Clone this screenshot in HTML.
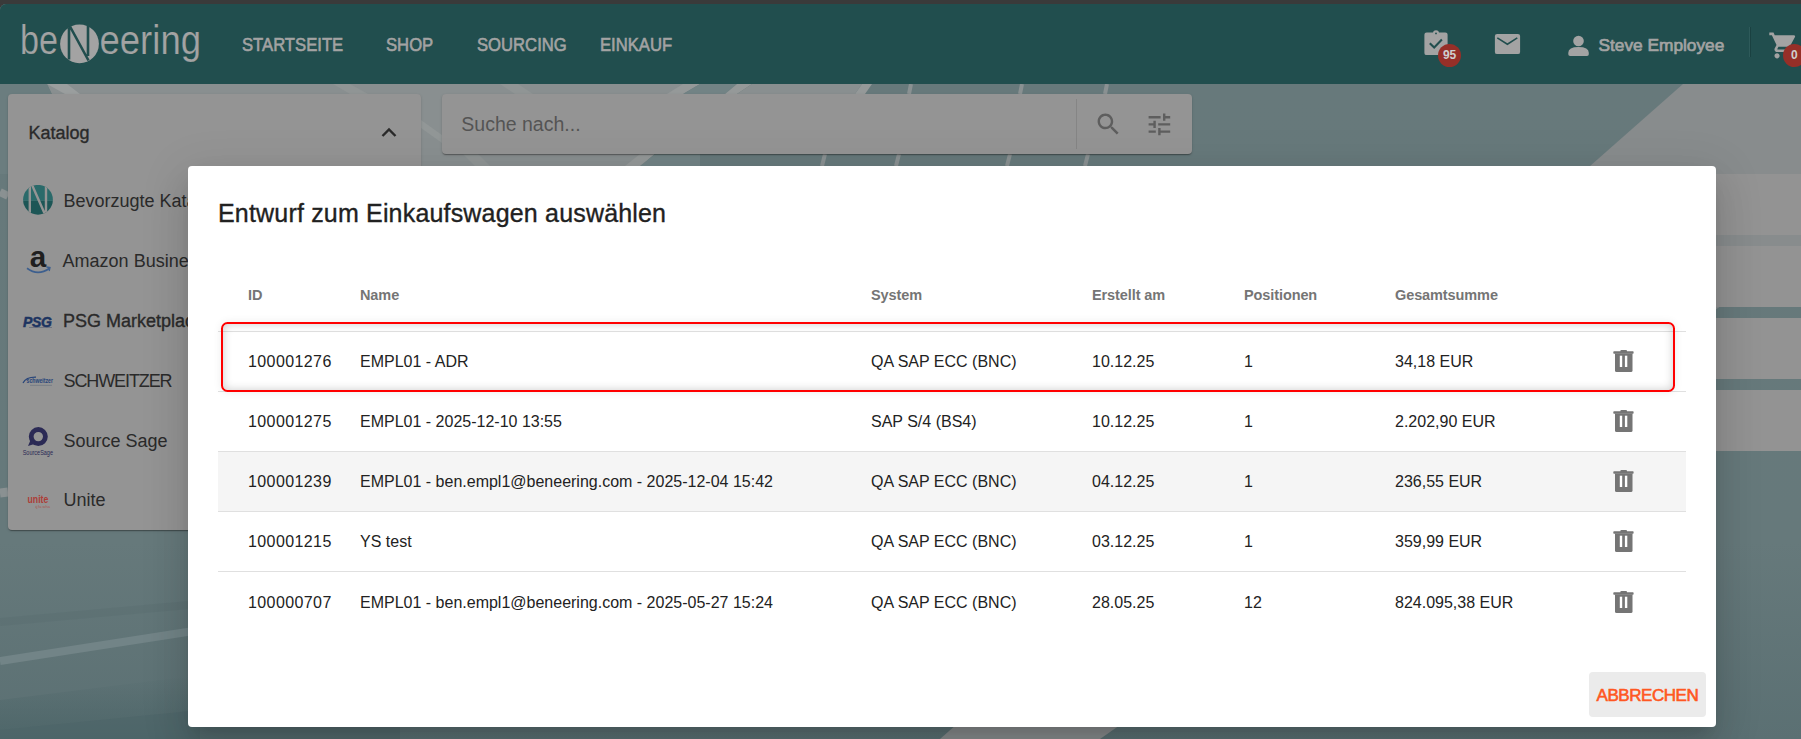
<!DOCTYPE html>
<html><head><meta charset="utf-8">
<style>
*{box-sizing:border-box;margin:0;padding:0}
html,body{width:1801px;height:739px;overflow:hidden;background:#3a3a3a}
body{position:relative;font-family:"Liberation Sans",sans-serif}
.a{position:absolute;white-space:nowrap}
#bg{left:0;top:4px;width:1801px;height:735px;background:#617477;border-top-left-radius:6px;overflow:hidden}
#hdr{left:0;top:4px;width:1801px;height:80px;background:#214e4e;border-top-left-radius:6px}
.nav{top:35.8px;font-size:18px;line-height:18px;color:#a3a3a3;transform:scaleX(0.925);transform-origin:0 0;-webkit-text-stroke:0.6px #a3a3a3}
.card{background:#949494;border-radius:4px;box-shadow:0 2px 1px -1px rgba(0,0,0,.2),0 1px 1px 0 rgba(0,0,0,.14),0 1px 3px 0 rgba(0,0,0,.12)}
.sbt{font-size:18px;line-height:18px;color:#2a2a2a}
.med{-webkit-text-stroke:0.35px currentColor}
#modal{left:188px;top:166px;width:1528px;height:561px;background:#fff;border-radius:4px;box-shadow:0 11px 15px -7px rgba(0,0,0,.14),0 24px 38px 3px rgba(0,0,0,.09),0 9px 46px 8px rgba(0,0,0,.08)}
.th{font-size:14.5px;line-height:14.5px;font-weight:700;color:#757575;letter-spacing:-0.1px}
.td{font-size:16px;line-height:16px;color:#222}
.id{letter-spacing:0.4px}
.hl{height:1px;background:#e0e0e0;left:30px;width:1468px}
</style></head><body>
<svg width="0" height="0" style="position:absolute"><defs>
<g id="trash"><rect x="10.3" y="4" width="6.7" height="2.6" rx="1" fill="#757575"/><path d="M3.6 5.2 H23.3 L23.6 6.5 L23.3 7.8 H3.6 L3.3 6.5 Z" fill="#757575"/><path d="M5 7.5 H22.5 V24.5 Q22.5 26 21 26 H6.5 Q5 26 5 24.5 Z" fill="#757575"/><rect x="9.8" y="9.7" width="2.4" height="11.3" fill="#fff"/><rect x="14.9" y="9.7" width="2.4" height="11.3" fill="#fff"/></g>
</defs></svg>

<div id="bg" class="a">
  <svg class="a" style="left:0;top:0" width="1801" height="735" viewBox="0 4 1801 735">
    <defs>
      <linearGradient id="gl" x1="0" y1="84" x2="0" y2="739" gradientUnits="userSpaceOnUse">
        <stop offset="0" stop-color="#67797b"/>
        <stop offset="0.7" stop-color="#66797b"/>
        <stop offset="1" stop-color="#5b7073"/>
      </linearGradient>
      <linearGradient id="gd" x1="0" y1="0" x2="0" y2="1">
        <stop offset="0" stop-color="#4b6467" stop-opacity="0"/>
        <stop offset="1" stop-color="#4b6467" stop-opacity="1"/>
      </linearGradient>
    </defs>
    <rect x="0" y="4" width="1801" height="735" fill="url(#gl)"/>
    <polygon points="0,700 200,675 200,739 0,739" fill="url(#gd)" opacity="0.8"/>
    <polygon points="0,730 400,690 400,739 0,739" fill="#4b6467" opacity="0.5"/>
    <path d="M0 661 L200 630" stroke="#728487" stroke-width="8" fill="none"/>
    <path d="M0 493 L8 492" stroke="#8a9192" stroke-width="9" fill="none"/>
    <path d="M0 192 L8 196" stroke="#8a9192" stroke-width="8" fill="none"/>
    <path d="M0 622 L200 604" stroke="#56696c" stroke-width="8" fill="none" opacity="0.3"/>
    <!-- upper grey region -->
    <polygon points="47,84 690,84 640,174 90,174" fill="#898f90"/>
    <polygon points="0,84 47,84 90,174 0,174" fill="#6b7d7f"/>
    <polygon points="47,84 67,84 80,94 65,94" fill="#9a9e9e"/>
    <polygon points="333,84 350,84 368,94 350,94" fill="#909595"/>
    <polygon points="500,84 518,84 533,94 515,94" fill="#909595"/>
    <polygon points="421,120 421,128 442,143 442,135" fill="#929797"/>
    <polygon points="463,154 478,154 490,166 475,166" fill="#909595"/>
    <polygon points="683,84 700,84 683,94 667,94" fill="#959999"/>
    <polygon points="700,84 737,84 725,94 683,94" fill="#728385"/>
    <polygon points="737,84 752,84 737,94 725,94" fill="#959999"/>
    <polygon points="752,84 862,84 855,94 737,94" fill="#898f90"/>
    <polygon points="862,84 872,84 865,94 855,94" fill="#959999"/>
    <polygon points="640,154 655,154 640,166 625,166" fill="#959999"/>
    <polygon points="655,154 700,154 700,166 640,166" fill="#728385"/>
    <path d="M911 84 L909 94 M1022 84 L1020 94 M1107 84 L1105 94 M825 154 L822 166 M899 154 L896 166 M1010 154 L1007 166 M1088 154 L1085 166" stroke="#8a9192" stroke-width="4" fill="none"/>
    <polygon points="1683,84 1801,84 1801,250 1100,739 940,739" fill="#888c8d"/>
  </svg>
</div>
<div id="hdr" class="a"></div>

<!-- logo -->
<svg class="a" style="left:0;top:0" width="220" height="84" viewBox="0 0 220 84">
  <g font-family="Liberation Sans" font-size="40.5" fill="#a3a3a3" stroke="#214e4e" stroke-width="0.2">
  <text x="20" y="54.4" textLength="38" lengthAdjust="spacingAndGlyphs">be</text>
  <text x="99.5" y="54.4" textLength="101.5" lengthAdjust="spacingAndGlyphs">eering</text>
  </g>
  <circle cx="79.5" cy="43.8" r="19.4" fill="#a3a3a3"/>
  <path d="M69 27.5 V59.5 M70 26.5 L88.5 60.5 M88 26 V56" stroke="#214e4e" stroke-width="2.6" fill="none"/>
</svg>

<div class="a nav" style="left:241.5px">STARTSEITE</div>
<div class="a nav" style="left:385.6px">SHOP</div>
<div class="a nav" style="left:476.5px">SOURCING</div>
<div class="a nav" style="left:599.5px">EINKAUF</div>

<!-- header right icons -->
<svg class="a" style="left:1420px;top:28px" width="32" height="32" viewBox="0 0 32 32"><rect x="4.4" y="4.6" width="23.2" height="22.5" rx="2.2" fill="#a3a3a3"/><circle cx="16" cy="5.2" r="3" fill="#a3a3a3"/><circle cx="16" cy="5.4" r="0.9" fill="#214e4e"/><path d="M9.8 15.2 L14.2 19.5 L21.9 11.6" stroke="#214e4e" stroke-width="2.1" fill="none"/></svg>
<div class="a" style="left:1438.2px;top:44px;width:22.8px;height:22.8px;border-radius:50%;background:#962f28;color:#cfcfcf;font-size:12px;font-weight:700;line-height:23.5px;text-align:center;letter-spacing:-0.2px">95</div>
<svg class="a" style="left:1490px;top:28px" width="34" height="30" viewBox="1490 28 34 30"><rect x="1494.9" y="33.9" width="25.2" height="20.2" rx="2.2" fill="#a3a3a3"/><path d="M1497.3 37.9 L1507.4 44.2 L1517.3 37.9" stroke="#214e4e" stroke-width="1.6" fill="none"/></svg>
<svg class="a" style="left:1565px;top:33px" width="27" height="26" viewBox="1565 33 27 26"><circle cx="1578.5" cy="41" r="5.3" fill="#a3a3a3"/><path d="M1568.3 56 V52.8 Q1568.3 47 1578.5 47 Q1588.8 47 1588.8 52.8 V54.2 Q1588.8 56 1587 56 H1570.1 Q1568.3 56 1568.3 54.2 Z" fill="#a3a3a3"/></svg>
<div class="a" style="left:1598.5px;top:37.2px;font-size:17.3px;line-height:17.3px;color:#a3a3a3;-webkit-text-stroke:0.7px #a3a3a3">Steve Employee</div>
<div class="a" style="left:1749px;top:27px;width:1px;height:30px;background:#2e5a5a"></div><div class="a" style="left:1750px;top:27px;width:1px;height:30px;background:#1a4141"></div>
<svg class="a" style="left:1768px;top:30.1px" width="31" height="31" viewBox="0 0 24 24"><path fill="#a3a3a3" d="M7 18c-1.1 0-1.99.9-1.99 2S5.9 22 7 22s2-.9 2-2-.9-2-2-2zM1 2v2h2l3.6 7.59-1.35 2.45c-.16.28-.25.610-.25.96 0 1.1.9 2 2 2h12v-2H7.42c-.14 0-.25-.11-.25-.25l.03-.12.9-1.63h7.45c.75 0 1.41-.41 1.75-1.03l3.58-6.49c.08-.14.12-.31.12-.48 0-.55-.45-1-1-1H5.21l-.94-2H1zm16 16c-1.1 0-1.99.9-1.99 2s.89 2 1.99 2 2-.9 2-2-.9-2-2-2z"/></svg>
<div class="a" style="left:1783px;top:44px;width:22.8px;height:22.8px;border-radius:50%;background:#962f28;color:#cfcfcf;font-size:12px;font-weight:700;line-height:23.5px;text-indent:8px">0</div>

<!-- sidebar card -->
<div class="a card" style="left:8px;top:94px;width:413px;height:436px"></div>
<div class="a sbt med" style="left:28.4px;top:123.9px">Katalog</div>
<svg class="a" style="left:378.5px;top:123.2px" width="20" height="16" viewBox="0 0 20 16"><path d="M3.5 13 L10 6.5 L16.5 13" stroke="#2a2a2a" stroke-width="2.4" fill="none"/></svg>

<!-- sidebar items -->
<svg class="a" style="left:23px;top:185px" width="30" height="30" viewBox="0 0 30 30">
  <defs><clipPath id="cc"><circle cx="15" cy="14.8" r="14.9"/></clipPath></defs>
  <g clip-path="url(#cc)"><rect width="30" height="15.8" fill="#2a6a6a"/><rect y="15.8" width="30" height="15" fill="#1d5656"/>
  <path d="M6.8 0 V30 M9.3 0.5 L21.6 28.5 M23 0 V30" stroke="#949494" stroke-width="2.4" fill="none"/></g>
</svg>
<div class="a sbt" style="left:63.5px;top:191.5px">Bevorzugte Katalog</div>
<svg class="a" style="left:28px;top:246px" width="22" height="24" viewBox="0 0 22 24"><text x="1.8" y="21" font-family="Liberation Sans" font-weight="700" font-size="30" fill="#1f1f1f" textLength="16.5" lengthAdjust="spacingAndGlyphs">a</text></svg>
<svg class="a" style="left:25px;top:264px" width="28" height="12" viewBox="0 0 28 12"><path d="M2 4.3 Q13 12.5 24.5 4.2" stroke="#3d5f8e" stroke-width="1.7" fill="none"/><path d="M21.5 3 L25 3.6 L24.2 7" stroke="#3d5f8e" stroke-width="1.3" fill="none"/></svg>
<div class="a sbt" style="left:62.6px;top:252.4px">Amazon Business</div>
<div class="a" style="left:23px;top:314.5px;font-size:14px;line-height:14px;font-weight:700;font-style:italic;color:#1d3461;letter-spacing:-0.3px;-webkit-text-stroke:0.5px #1d3461">PSG</div><div class="a" style="left:29px;top:327px;width:23px;height:1px;background:#4a5470;opacity:.5"></div>
<div class="a sbt med" style="left:63px;top:312.2px">PSG Marketplace</div>
<svg class="a" style="left:22px;top:374px" width="32" height="14" viewBox="0 0 32 14"><path d="M1 9 Q4 3 14 3.2" stroke="#27457a" stroke-width="1.2" fill="none"/><text x="4.5" y="9" font-family="Liberation Sans" font-weight="700" font-size="6.5" fill="#27457a" textLength="26.5" lengthAdjust="spacingAndGlyphs">schweitzer</text><rect x="8" y="10.8" width="22" height="1.2" fill="#6d7580" opacity=".6"/></svg>
<div class="a sbt" style="left:63.5px;top:372.4px;letter-spacing:-1.1px">SCHWEITZER</div>
<svg class="a" style="left:22px;top:424px" width="34" height="34" viewBox="0 0 34 34"><circle cx="16.3" cy="12.6" r="7.1" stroke="#2b2a55" stroke-width="4.8" fill="none"/><path d="M9 15 L6 22 L14 19.5 Z" fill="#2b2a55"/><text x="0.7" y="31.3" font-family="Liberation Sans" font-size="7.5" fill="#2b2a55" textLength="30.3" lengthAdjust="spacingAndGlyphs">SourceSage</text></svg>
<div class="a sbt" style="left:63.4px;top:431.5px">Source Sage</div>
<svg class="a" style="left:26px;top:494px" width="26" height="16" viewBox="0 0 26 16"><text x="1.5" y="9.3" font-family="Liberation Sans" font-weight="700" font-size="10" fill="#ad3d37" textLength="20.8" lengthAdjust="spacingAndGlyphs">unite</text><text x="9" y="14" font-family="Liberation Sans" font-size="4" fill="#b0403a" opacity=".7">ꝗ fa wha</text></svg>
<div class="a sbt" style="left:63.4px;top:491.4px">Unite</div>

<!-- search -->
<div class="a card" style="left:442px;top:94px;width:750px;height:60px"></div>
<div class="a" style="left:461.3px;top:114.6px;font-size:19.5px;line-height:19.5px;color:#545454">Suche nach...</div>
<div class="a" style="left:1076px;top:99px;width:1px;height:50px;background:#858585"></div>
<svg class="a" style="left:1094.4px;top:109.7px" width="28.8" height="28.8" viewBox="0 0 24 24"><path fill="#5e5e5e" d="M15.5 14h-.79l-.28-.27C15.41 12.59 16 11.11 16 9.5 16 5.910 13.09 3 9.5 3S3 5.91 3 9.5 5.91 16 9.5 16c1.61 0 3.09-.59 4.23-1.57l.27.28v.79l5 4.99L20.49 19l-4.99-5zm-6 0C7.01 14 5 11.99 5 9.5S7.01 5 9.5 5 14 7.01 14 9.5 11.99 14 9.5 14z"/></svg>
<svg class="a" style="left:1144.8px;top:109.7px" width="28.8" height="28.8" viewBox="0 0 24 24"><path fill="#5e5e5e" d="M3 17v2h6v-2H3zM3 5v2h10V5H3zm10 16v-2h8v-2h-8v-2h-2v6h2zM7 9v2H3v2h4v2h2V9H7zm14 4v-2H11v2h10zm-6-4h2V7h4V5h-4V3h-2v6z"/></svg>

<!-- right cards -->
<div class="a" style="left:1700px;top:174px;width:101px;height:61px;background:#939393"></div>
<div class="a" style="left:1700px;top:246px;width:101px;height:61px;background:#939393"></div>
<div class="a" style="left:1700px;top:318px;width:101px;height:61px;background:#939393"></div>
<div class="a" style="left:1700px;top:390px;width:101px;height:61px;background:#939393"></div>

<!-- modal -->
<div id="modal" class="a">
<div class="a" style="left:30px;top:34.9px;font-size:25px;line-height:25px;letter-spacing:0.18px;color:#212121;-webkit-text-stroke:0.35px #212121">Entwurf zum Einkaufswagen auswählen</div>
<div class="a th" style="left:60px;top:121.5px">ID</div>
<div class="a th" style="left:172px;top:121.5px">Name</div>
<div class="a th" style="left:683px;top:121.5px">System</div>
<div class="a th" style="left:904px;top:121.5px">Erstellt am</div>
<div class="a th" style="left:1056px;top:121.5px">Positionen</div>
<div class="a th" style="left:1207px;top:121.5px">Gesamtsumme</div>
<div class="a hl" style="top:165px"></div>
<div class="a hl" style="top:225px"></div>
<div class="a" style="left:30px;top:286px;width:1468px;height:59px;background:#f5f5f5"></div>
<div class="a hl" style="top:285px"></div>
<div class="a hl" style="top:345px"></div>
<div class="a hl" style="top:405px"></div>
<div class="a td id" style="left:60px;top:187.5px">100001276</div>
<div class="a td" style="left:172px;top:187.5px">EMPL01 - ADR</div>
<div class="a td" style="left:683px;top:187.5px">QA SAP ECC (BNC)</div>
<div class="a td" style="left:904px;top:187.5px">10.12.25</div>
<div class="a td" style="left:1056px;top:187.5px">1</div>
<div class="a td" style="left:1207px;top:187.5px">34,18 EUR</div>
<svg class="a" style="left:1422px;top:180px" width="28" height="30" viewBox="0 0 28 30"><use href="#trash"/></svg>
<div class="a td id" style="left:60px;top:247.5px">100001275</div>
<div class="a td" style="left:172px;top:247.5px">EMPL01 - 2025-12-10 13:55</div>
<div class="a td" style="left:683px;top:247.5px">SAP S/4 (BS4)</div>
<div class="a td" style="left:904px;top:247.5px">10.12.25</div>
<div class="a td" style="left:1056px;top:247.5px">1</div>
<div class="a td" style="left:1207px;top:247.5px">2.202,90 EUR</div>
<svg class="a" style="left:1422px;top:240px" width="28" height="30" viewBox="0 0 28 30"><use href="#trash"/></svg>
<div class="a td id" style="left:60px;top:307.5px">100001239</div>
<div class="a td" style="left:172px;top:307.5px">EMPL01 - ben.empl1@beneering.com - 2025-12-04 15:42</div>
<div class="a td" style="left:683px;top:307.5px">QA SAP ECC (BNC)</div>
<div class="a td" style="left:904px;top:307.5px">04.12.25</div>
<div class="a td" style="left:1056px;top:307.5px">1</div>
<div class="a td" style="left:1207px;top:307.5px">236,55 EUR</div>
<svg class="a" style="left:1422px;top:300px" width="28" height="30" viewBox="0 0 28 30"><use href="#trash"/></svg>
<div class="a td id" style="left:60px;top:367.5px">100001215</div>
<div class="a td" style="left:172px;top:367.5px">YS test</div>
<div class="a td" style="left:683px;top:367.5px">QA SAP ECC (BNC)</div>
<div class="a td" style="left:904px;top:367.5px">03.12.25</div>
<div class="a td" style="left:1056px;top:367.5px">1</div>
<div class="a td" style="left:1207px;top:367.5px">359,99 EUR</div>
<svg class="a" style="left:1422px;top:360px" width="28" height="30" viewBox="0 0 28 30"><use href="#trash"/></svg>
<div class="a td id" style="left:60px;top:428.5px">100000707</div>
<div class="a td" style="left:172px;top:428.5px">EMPL01 - ben.empl1@beneering.com - 2025-05-27 15:24</div>
<div class="a td" style="left:683px;top:428.5px">QA SAP ECC (BNC)</div>
<div class="a td" style="left:904px;top:428.5px">28.05.25</div>
<div class="a td" style="left:1056px;top:428.5px">12</div>
<div class="a td" style="left:1207px;top:428.5px">824.095,38 EUR</div>
<svg class="a" style="left:1422px;top:421px" width="28" height="30" viewBox="0 0 28 30"><use href="#trash"/></svg>
<div class="a" style="left:33.2px;top:155.5px;width:1453.5px;height:70.2px;border:2.4px solid #ff0000;border-radius:6.5px;box-shadow:inset 0 0 10px rgba(0,0,0,.2),0 0 8px rgba(0,0,0,.08)"></div>
<div class="a" style="left:1401px;top:506px;width:117px;height:45px;background:#ebebeb;border-radius:4px"></div>
<div class="a" style="left:1408.5px;top:520.5px;font-size:17px;line-height:17px;letter-spacing:-0.45px;color:#ff5722;-webkit-text-stroke:0.6px #ff5722">ABBRECHEN</div>
</div>
</body></html>
